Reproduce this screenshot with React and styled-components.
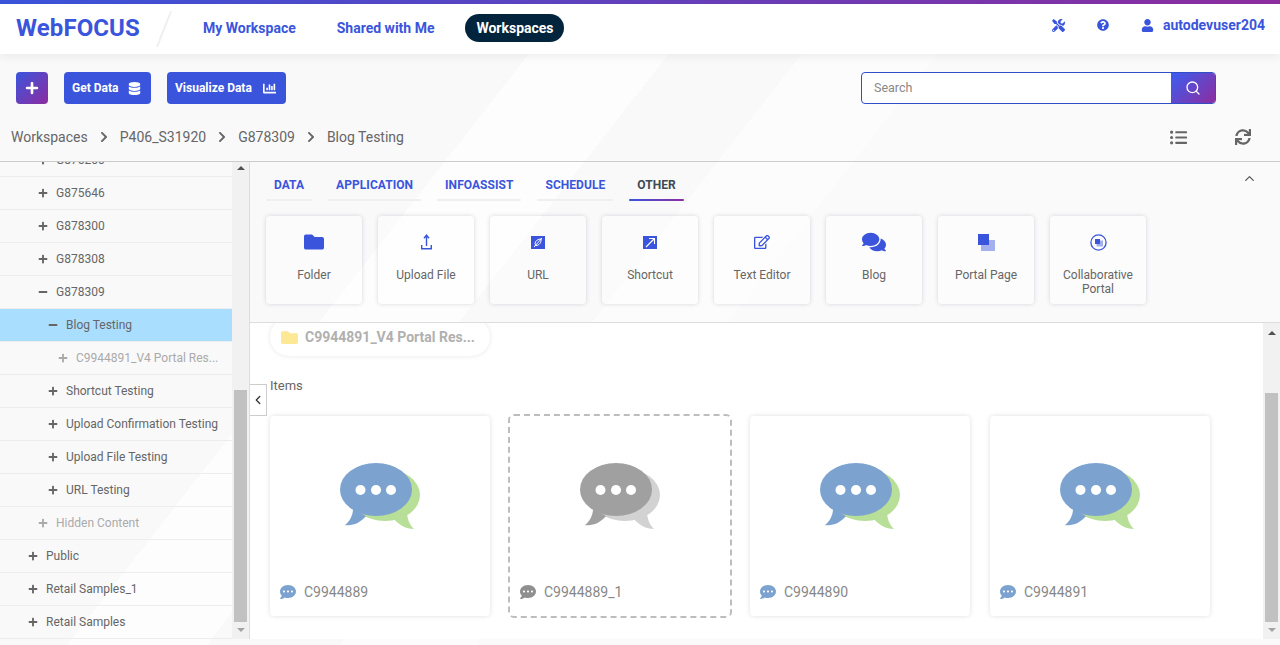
import React from "react";
import styled, { createGlobalStyle } from "styled-components";
import {
  FaTools, FaQuestionCircle, FaUser, FaDatabase, FaChartBar, FaListUl, FaSync,
  FaFolder, FaComments, FaRegEdit, FaCommentDots, FaPlus, FaMinus, FaChevronRight,
} from "react-icons/fa";
import { Search, ChevronUp, ChevronLeft } from "lucide-react";

const BLUE = "#3a55dc";
const GRAD = "linear-gradient(135deg, #3a55dc 0%, #8e2da0 100%)";

const Global = createGlobalStyle`
  html, body { margin: 0; padding: 0; height: 100%; }
  body { font-family: Roboto, "Liberation Sans", sans-serif; overflow: hidden; }
  * { box-sizing: border-box; }
`;

const Page = styled.div`
  width: 1280px; height: 645px; overflow: hidden; display: flex; flex-direction: column;
  background: linear-gradient(128deg, #f9f9fa 0, #f9f9fa 450px, #fdfdfd 450px, #fdfdfd 560px, #f9f9fa 560px,
    #f9f9fa 665px, #fcfcfc 665px, #fcfcfc 772px, #fafafb 772px);
`;
const TopStripe = styled.div`height: 4px; background: linear-gradient(90deg, #3a55dc, #8e2da0);`;
const Header = styled.header`
  height: 50px; background: #fff; display: flex; align-items: center; padding: 0 15px 0 16px;
  box-shadow: 0 2px 10px rgba(0,0,0,.07); position: relative; z-index: 2;
`;
const Logo = styled.div`font-size: 24px; font-weight: 700; letter-spacing: .1px; color: ${BLUE}; width: 124px; margin-top: -2px;`;
const Slash = styled.svg`width: 16px; height: 38px; margin: 0 0 0 16px; flex: none;`;
const Nav = styled.nav`display: flex; align-items: center; margin-left: 31px; margin-top: -2px;`;
const NavItem = styled.a`
  font-size: 14px; font-weight: 700; color: ${BLUE}; margin-right: 41px; white-space: nowrap; 
`;
const NavPill = styled.a`
  font-size: 14px; font-weight: 700; color: #fff; background: #03243d; height: 28px; width: 99px; margin-left: -10px;
  border-radius: 14px; display: flex; align-items: center; justify-content: center;
`;
const UserArea = styled.div`
  margin-left: auto; display: flex; align-items: center; color: ${BLUE}; font-size: 14px; font-weight: 700; margin-top: -8px;
`;
const HeadIcon = styled.span`display: flex; margin-right: ${p => p.$mr}px;`;

const Toolbar = styled.div`height: 66px; padding: 18px 64px 0 16px; display: flex; align-items: flex-start;`;
const PlusButton = styled.button`
  width: 32px; height: 32px; border: 0; border-radius: 4px; background: ${GRAD}; color: #fff; display: flex;
  align-items: center; justify-content: center; margin-right: 16px; padding: 0;
`;
const ActionButton = styled.button`
  height: 32px; width: ${p => p.$w}px; border: 0; border-radius: 4px; background: ${BLUE}; color: #fff; display: flex;
  align-items: center; justify-content: space-between; padding: 0 10px 0 8px; margin-right: 16px;
  font: 700 12px Roboto, sans-serif;
`;
const SearchBox = styled.div`
  margin-left: auto; width: 355px; height: 32px; border: 1px solid #2f4fc9; border-radius: 4px; display: flex; overflow: hidden; background: #fff;
`;
const SearchText = styled.div`flex: 1; font-size: 12.5px; color: #888; padding-left: 12px; line-height: 30px;`;
const SearchButton = styled.div`
  width: 44px; background: linear-gradient(135deg, #3b5ef0, #8e2da0); color: #fff; display: flex; align-items: center; justify-content: center;
`;
const CrumbRow = styled.div`height: 41px; display: flex; align-items: flex-start; padding: 7px 29px 0 11px; color: #666; font-size: 14px;`;
const Crumb = styled.span`line-height: 20px;`;
const CrumbSep = styled.span`display: flex; margin: 4px 10px 0 10px; color: #666;`;
const ViewTools = styled.div`margin-left: auto; display: flex; align-items: center; gap: 48px; color: #666; height: 20px;`;

const Main = styled.main`height: 478px; display: flex; border-top: 1px solid #ccc;`;
const Sidebar = styled.aside`width: 250px; display: flex; border-right: 1px solid #ddd; flex: none;`;
const Tree = styled.div`width: 232px; height: 100%; overflow: hidden; display: flex; flex-direction: column; justify-content: flex-end;`;
const Row = styled.div`
  height: 33px; flex: none; display: flex; align-items: center; padding-left: ${p => 28 + p.$level * 10}px;
  font-size: 12px; border-bottom: 1px solid #ededed; color: ${p => (p.$muted ? "#aaa" : "#666")};
  background: ${p => (p.$active ? "#aadeff" : "transparent")};
  svg { flex: none; margin-right: 8px; }
`;
const Scrollbar = styled.div`
  width: 17px; flex: none; background: #f1f1f1; display: flex; flex-direction: column; align-items: center; position: relative;
`;
const ArrowUp = styled.div`
  width: 0; height: 0; border-left: 4px solid transparent; border-right: 4px solid transparent; border-bottom: 4px solid #505050; margin-top: ${p => p.$top}px;
`;
const Thumb = styled.div`width: 13px; height: ${p => p.$h}px; margin-top: ${p => p.$top}px; background: #c1c1c1;`;
const ArrowDown = styled.div`
  width: 0; height: 0; border-left: 4px solid transparent; border-right: 4px solid transparent; border-top: 4px solid #a3a3a3; margin-top: 6px;
`;

const Right = styled.section`flex: 1; min-width: 0; display: flex; flex-direction: column;`;
const CreatePanel = styled.div`height: 161px; padding: 13px 0 0 16px; border-bottom: 1px solid #ddd; position: relative; z-index: 1;`;
const Tabs = styled.div`display: flex; gap: 16px;`;
const Tab = styled.div`
  height: 26px; padding: 0 8px; font-size: 12px; font-weight: 700; line-height: 20px; letter-spacing: .05px;
  color: ${p => (p.$active ? "#404a55" : BLUE)}; position: relative;
  &::after {
    content: ""; position: absolute; left: 0; right: 0; bottom: 0; height: 2px; border-radius: 1px;
    background: ${p => (p.$active ? "linear-gradient(90deg,#3a55dc,#8e2da0)" : "#eeeff1")};
  }
`;
const Collapse = styled.span`position: absolute; right: 23px; top: 9px; color: #555; display: flex;`;
const Tiles = styled.div`display: flex; gap: 16px; margin-top: 15px;`;
const Tile = styled.div`
  width: 96px; height: 88px; border-radius: 4px; padding-top: 10px; background: rgba(255,255,255,.35);
  box-shadow: 0 0 4px rgba(60,70,90,.2); display: flex; flex-direction: column; align-items: center;
`;
const TileIcon = styled.div`height: 32px; display: flex; align-items: center; justify-content: center; color: ${BLUE}; margin-bottom: 10px;`;
const TileLabel = styled.div`font-size: 12px; line-height: 14px; color: #666; text-align: center; width: 80px;`;

const Content = styled.div`flex: 1; min-height: 0; display: flex; background: #fff; position: relative; overflow: hidden;`;
const Handle = styled.div`
  position: absolute; left: 0; top: 61px; width: 17px; height: 32px; background: #fff; border: 1px solid #ccc; border-left: 0;
  display: flex; align-items: center; justify-content: center; color: #333;
`;
const Scroll = styled.div`flex: 1; min-width: 0; padding-left: 20px;`;
const FolderPill = styled.div`
  width: 220px; height: 38px; margin-top: -5px; border-radius: 19px; box-shadow: 0 0 5px rgba(0,0,0,.1); display: flex; align-items: center;
  padding-left: 11px; font-size: 14px; font-weight: 700; color: #b0b0b0; background: #fff;
  svg { margin-right: 7px; color: #fde896; }
`;
const SectionTitle = styled.div`font-size: 13px; color: #666; margin-top: 21px; line-height: 18px;`;
const Cards = styled.div`display: flex; gap: 20px; margin-top: 21px;`;
const Card = styled.div`
  width: 220px; height: 200px; border-radius: 4px; display: flex; flex-direction: column; align-items: center; padding-top: 44px;
  box-shadow: ${p => (p.$dashed ? "none" : "0 0 5px rgba(0,0,0,.13)")};
  outline: ${p => (p.$dashed ? "2px dashed #bdbdbd" : "none")};
`;
const CardFooter = styled.div`
  align-self: stretch; margin-top: auto; padding: 0 0 16px 10px; display: flex; align-items: center; gap: 8px; font-size: 14px; color: #888; line-height: 16px;
`;
const BottomStrip = styled.div`height: 6px;`;

const Bubbles = ({ front, back }) => (
  <svg width="84" height="72" viewBox="0 0 84 72">
    <ellipse cx="47" cy="35" rx="35" ry="26" fill={back} />
    <path d="M56 59 C61 65 68 69 76 69 C72 65 69 59 69 52 Z" fill={back} />
    <ellipse cx="38" cy="29.5" rx="36" ry="26.5" fill={front} />
    <path d="M15 49 C15 56 11 62 7 65 C15 66 22 63 28 56 Z" fill={front} />
    <circle cx="22.5" cy="30" r="5" fill="#fff" />
    <circle cx="38" cy="30" r="5" fill="#fff" />
    <circle cx="53" cy="30" r="5" fill="#fff" />
  </svg>
);
const UploadIcon = () => (
  <svg width="11" height="16" viewBox="0 0 11 16" fill="none" stroke={BLUE} strokeWidth="1.4">
    <path d="M5.5 12 V2 M3 4.2 L5.5 1.2 L8 4.2" />
    <path d="M.7 11 V14.8 H10.3 V11" />
  </svg>
);
const UrlIcon = () => (
  <svg width="14" height="13" viewBox="0 0 14 13">
    <rect width="14" height="13" fill={BLUE} />
    <path d="M4 7.5 C4.5 4.5 7 3 10 3 C10.5 6 8.5 9.5 4.8 9.6 Z M3 11 L11 2" fill="none" stroke="#fff" strokeWidth="1" />
  </svg>
);
const ShortcutIcon = () => (
  <svg width="14" height="13" viewBox="0 0 14 13">
    <rect width="14" height="13" fill={BLUE} />
    <path d="M3 11 L11 3 M6 2.5 H11.5 V8" fill="none" stroke="#fff" strokeWidth="1.1" />
  </svg>
);
const PortalPageIcon = () => (
  <svg width="17" height="17" viewBox="0 0 17 17">
    <rect x="3" y="6" width="14" height="11" fill={BLUE} opacity=".45" />
    <rect x="0" y="0" width="11" height="11" fill={BLUE} />
  </svg>
);
const CollabIcon = () => (
  <svg width="17" height="17" viewBox="0 0 17 17">
    <circle cx="8.5" cy="8.5" r="7.6" fill="none" stroke={BLUE} strokeWidth="1.3" />
    <rect x="6.5" y="6.5" width="6.5" height="6" fill={BLUE} opacity=".45" />
    <rect x="5" y="5" width="5" height="5" fill={BLUE} />
  </svg>
);
const Slanted = () => (
  <Slash viewBox="0 0 16 38"><path d="M15 1 L1 37" stroke="#efefef" strokeWidth="2" /></Slash>
);

const rows = [
  [1, "G875200"], [1, "G875646"], [1, "G878300"], [1, "G878308"], [1, "G878309", { open: true }],
  [2, "Blog Testing", { open: true, active: true }], [3, "C9944891_V4 Portal Res...", { muted: true }],
  [2, "Shortcut Testing"], [2, "Upload Confirmation Testing"], [2, "Upload File Testing"], [2, "URL Testing"],
  [1, "Hidden Content", { muted: true }], [0, "Public"], [0, "Retail Samples_1"], [0, "Retail Samples"],
];
const tabs = [["DATA"], ["APPLICATION"], ["INFOASSIST"], ["SCHEDULE"], ["OTHER", true]];
const tiles = [
  ["Folder", <FaFolder size={20} />], ["Upload File", <UploadIcon />], ["URL", <UrlIcon />], ["Shortcut", <ShortcutIcon />],
  ["Text Editor", <FaRegEdit size={16} />], ["Blog", <FaComments size={24} />], ["Portal Page", <PortalPageIcon />],
  ["Collaborative Portal", <CollabIcon />],
];
const cards = [["C9944889"], ["C9944889_1", true], ["C9944890"], ["C9944891"]];

export default function App() {
  return (
    <Page>
      <Global />
      <TopStripe />
      <Header>
        <Logo>WebFOCUS</Logo>
        <Slanted />
        <Nav>
          <NavItem>My Workspace</NavItem>
          <NavItem>Shared with Me</NavItem>
          <NavPill>Workspaces</NavPill>
        </Nav>
        <UserArea>
          <HeadIcon $mr={32}><FaTools size={13} /></HeadIcon>
          <HeadIcon $mr={32}><FaQuestionCircle size={12} /></HeadIcon>
          <HeadIcon $mr={9}><FaUser size={13} /></HeadIcon>
          autodevuser204
        </UserArea>
      </Header>
      <Toolbar>
        <PlusButton><FaPlus size={14} /></PlusButton>
        <ActionButton $w={87}>Get Data <FaDatabase size={13} /></ActionButton>
        <ActionButton $w={119}>Visualize Data <FaChartBar size={13} /></ActionButton>
        <SearchBox>
          <SearchText>Search</SearchText>
          <SearchButton><Search size={16} strokeWidth={2} /></SearchButton>
        </SearchBox>
      </Toolbar>
      <CrumbRow>
        <Crumb>Workspaces</Crumb><CrumbSep><FaChevronRight size={12} /></CrumbSep>
        <Crumb>P406_S31920</Crumb><CrumbSep><FaChevronRight size={12} /></CrumbSep>
        <Crumb>G878309</Crumb><CrumbSep><FaChevronRight size={12} /></CrumbSep>
        <Crumb>Blog Testing</Crumb>
        <ViewTools><FaListUl size={17} /><FaSync size={16} /></ViewTools>
      </CrumbRow>
      <Main>
        <Sidebar>
          <Tree>
            {rows.map(([level, name, o = {}]) => (
              <Row key={name} $level={level} $muted={o.muted} $active={o.active}>
                {o.open ? <FaMinus size={10} /> : <FaPlus size={10} />}
                {name}
              </Row>
            ))}
          </Tree>
          <Scrollbar>
            <ArrowUp $top={4} />
            <Thumb $top={220} $h={232} />
            <ArrowDown />
          </Scrollbar>
        </Sidebar>
        <Right>
          <CreatePanel>
            <Tabs>
              {tabs.map(([t, a]) => <Tab key={t} $active={a}>{t}</Tab>)}
            </Tabs>
            <Collapse><ChevronUp size={15} strokeWidth={2} /></Collapse>
            <Tiles>
              {tiles.map(([label, icon]) => (
                <Tile key={label}>
                  <TileIcon>{icon}</TileIcon>
                  <TileLabel>{label}</TileLabel>
                </Tile>
              ))}
            </Tiles>
          </CreatePanel>
          <Content>
            <Handle><ChevronLeft size={14} strokeWidth={2.2} /></Handle>
            <Scroll>
              <FolderPill><FaFolder size={17} />C9944891_V4 Portal Res...</FolderPill>
              <SectionTitle>Items</SectionTitle>
              <Cards>
                {cards.map(([name, dashed]) => (
                  <Card key={name} $dashed={dashed}>
                    <Bubbles front={dashed ? "#a0a0a0" : "#7ca3cf"} back={dashed ? "#d2d2d2" : "#b7df97"} />
                    <CardFooter>
                      <FaCommentDots size={16} color={dashed ? "#8f8f8f" : "#7ca3cf"} />
                      {name}
                    </CardFooter>
                  </Card>
                ))}
              </Cards>
            </Scroll>
            <Scrollbar>
              <ArrowUp $top={8} />
              <Thumb $top={58} $h={229} />
              <ArrowDown />
            </Scrollbar>
          </Content>
        </Right>
      </Main>
      <BottomStrip />
    </Page>
  );
}
